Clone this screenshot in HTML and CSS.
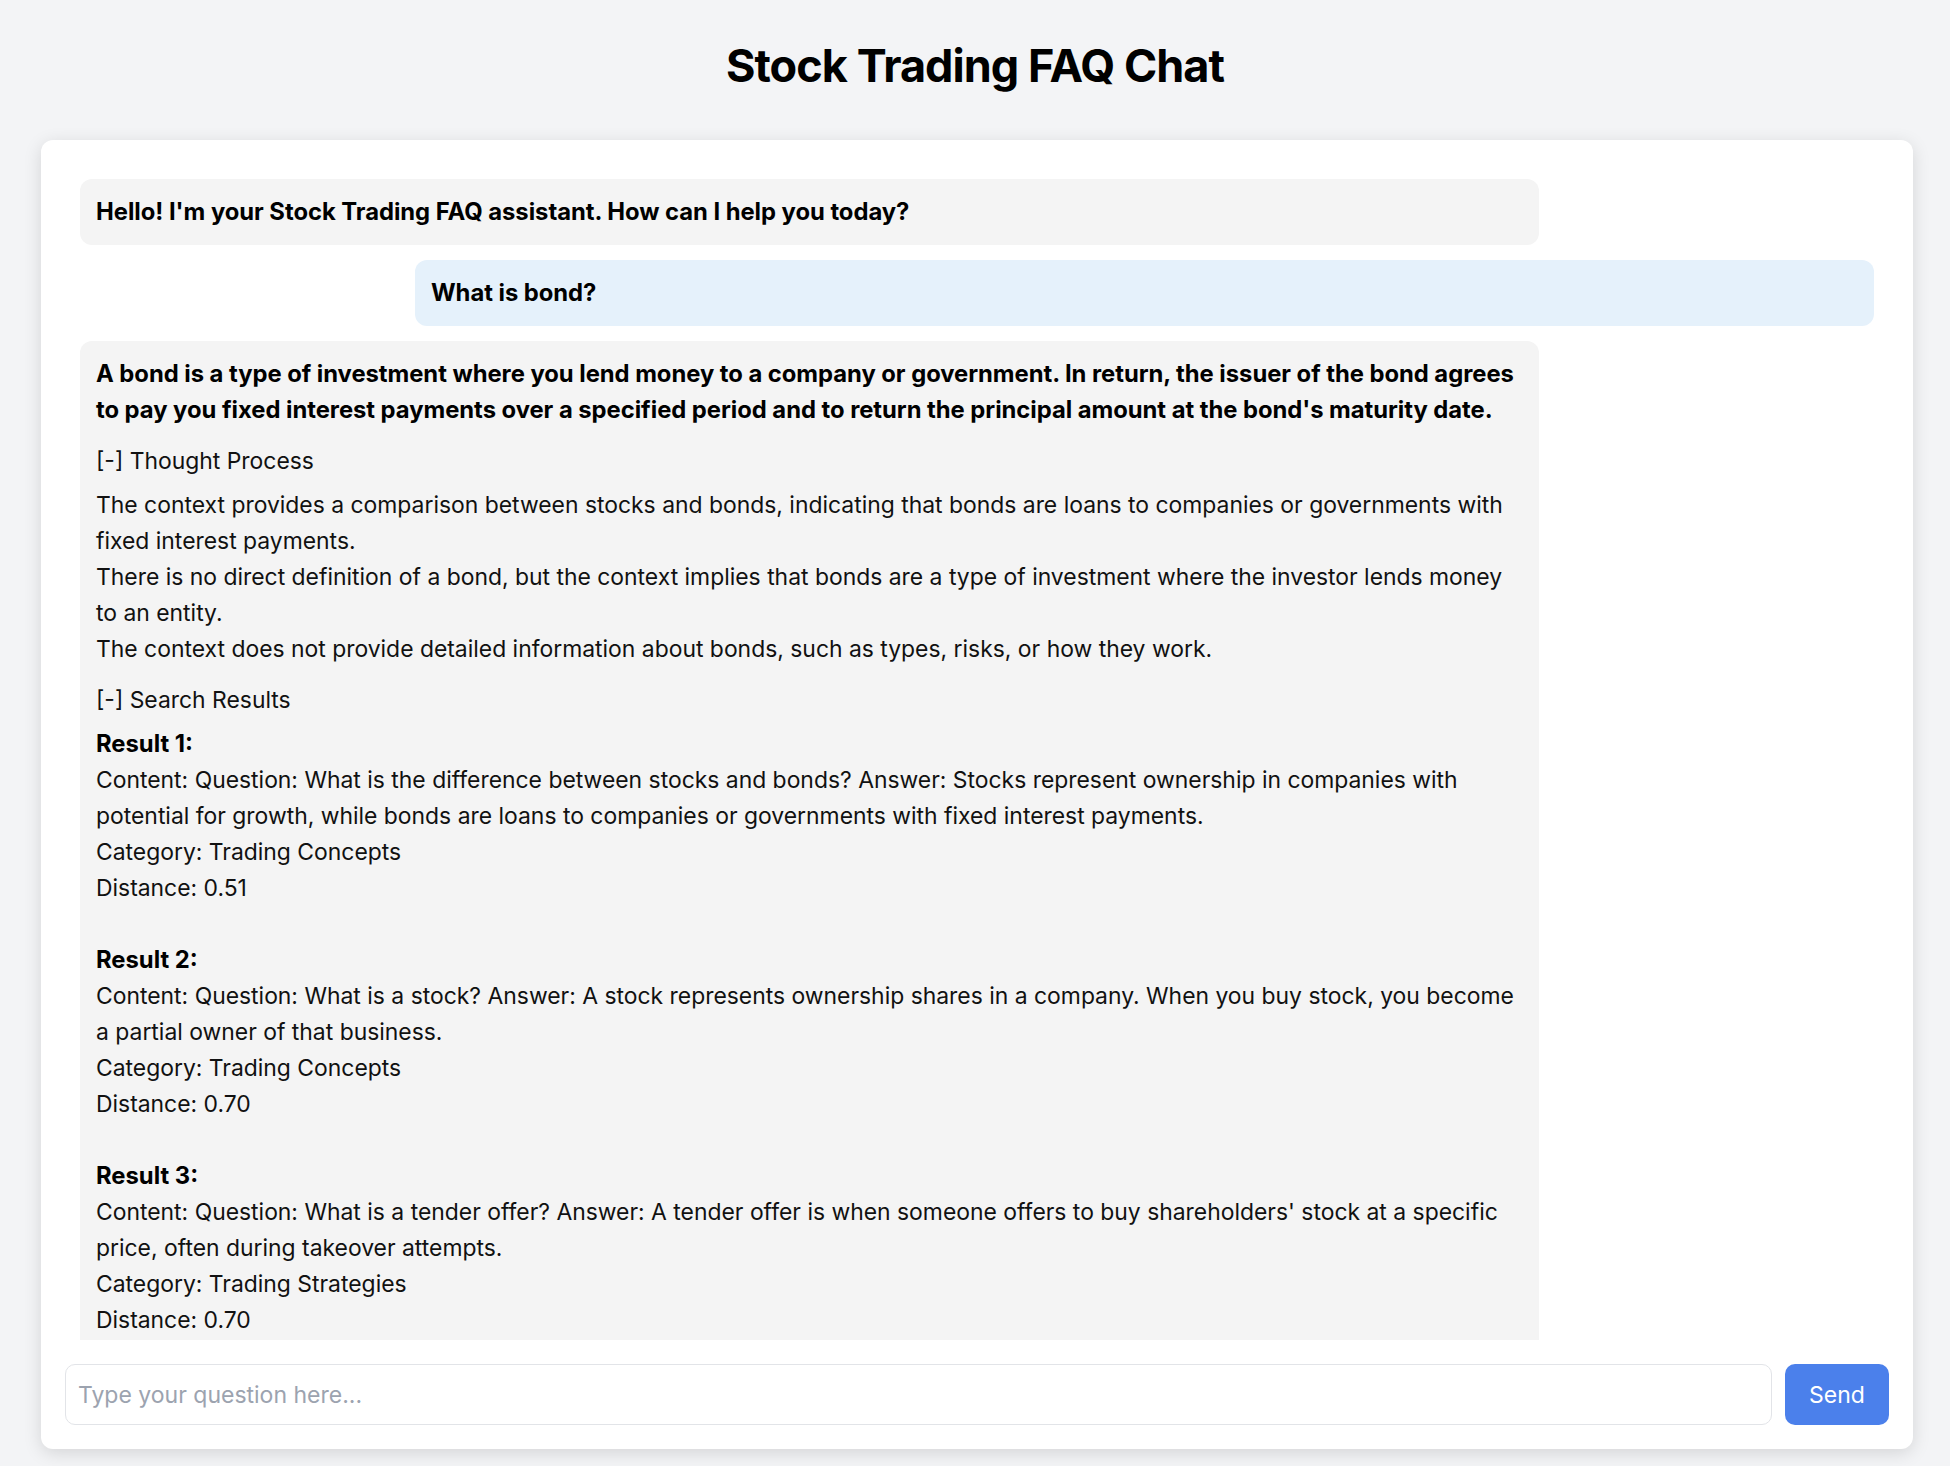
FILE: index.html
```html
<!DOCTYPE html>
<html lang="en">
<head>
<meta charset="utf-8">
<title>Stock Trading FAQ Chat</title>
<link rel="stylesheet" href="styles.css">
</head>
<body>
  <h1 class="title">Stock Trading FAQ Chat</h1>
  <main class="card">
    <div class="messages">
      <div class="bubble bot">
        <p class="answer">Hello! I'm your Stock Trading FAQ assistant. How can I help you today?</p>
      </div>
      <div class="bubble user">
        <p class="answer">What is bond?</p>
      </div>
      <div class="bubble bot">
        <p class="answer">A bond is a type of investment where you lend money to a company or government. In return, the issuer of the bond agrees to pay you fixed interest payments over a specified period and to return the principal amount at the bond's maturity date.</p>
        <div class="toggle">[-] Thought Process</div>
        <div class="section">
          <div>The context provides a comparison between stocks and bonds, indicating that bonds are loans to companies or governments with fixed interest payments.</div>
          <div>There is no direct definition of a bond, but the context implies that bonds are a type of investment where the investor lends money to an entity.</div>
          <div>The context does not provide detailed information about bonds, such as types, risks, or how they work.</div>
        </div>
        <div class="toggle">[-] Search Results</div>
        <div class="section">
          <div class="result">
            <div class="result-title">Result 1:</div>
            <div>Content: Question: What is the difference between stocks and bonds? Answer: Stocks represent ownership in companies with potential for growth, while bonds are loans to companies or governments with fixed interest payments.</div>
            <div>Category: Trading Concepts</div>
            <div>Distance: 0.51</div>
          </div>
          <div class="result">
            <div class="result-title">Result 2:</div>
            <div>Content: Question: What is a stock? Answer: A stock represents ownership shares in a company. When you buy stock, you become a partial owner of that business.</div>
            <div>Category: Trading Concepts</div>
            <div>Distance: 0.70</div>
          </div>
          <div class="result">
            <div class="result-title">Result 3:</div>
            <div>Content: Question: What is a tender offer? Answer: A tender offer is when someone offers to buy shareholders' stock at a specific price, often during takeover attempts.</div>
            <div>Category: Trading Strategies</div>
            <div>Distance: 0.70</div>
          </div>
        </div>
      </div>
    </div>
    <form class="composer">
      <input class="question" type="text" placeholder="Type your question here...">
      <button class="send" type="button">Send</button>
    </form>
  </main>
</body>
</html>
```

FILE: styles.css
```css
* { box-sizing: border-box; }

html, body {
  margin: 0;
  padding: 0;
  background: #f3f4f6;
  height: 1466px;
  overflow: hidden;
}

body {
  font-family: Inter, "Noto Sans", sans-serif;
  color: #111;
  font-size: 22.9px;
  line-height: 36px;
}

.title {
  margin: 38px 0 47px;
  font-size: 45px;
  line-height: 55px;
  font-weight: 700;
  text-align: center;
  color: #000;
  letter-spacing: -0.95px;
}

.card {
  margin-left: 41px;
  width: 1872px;
  height: 1309px;
  background: #fff;
  border-radius: 12px;
  box-shadow: 0 4px 18px rgba(0, 0, 0, 0.13);
  padding: 24px;
  display: flex;
  flex-direction: column;
  gap: 24px;
}

.messages {
  flex: 1;
  min-height: 0;
  overflow: hidden;
  padding: 15px 15px 0;
  display: flex;
  flex-direction: column;
  gap: 15px;
}

.bubble {
  width: 81.33%;
  flex-shrink: 0;
  padding: 15px 16px;
  border-radius: 12px;
}

.bot {
  background: #f4f4f4;
  align-self: flex-start;
}

.user {
  background: #e5f1fb;
  align-self: flex-end;
}

.answer {
  margin: 0;
  font-size: 23.8px;
  letter-spacing: -0.03px;
  font-weight: 700;
  color: #000;
}

.toggle {
  margin-top: 15px;
  cursor: pointer;
}

.section {
  margin-top: 8px;
}

.result {
  margin-bottom: 36px;
}

.result-title {
  font-size: 23.8px;
  font-weight: 700;
  color: #000;
}

.composer {
  display: flex;
  gap: 13px;
  height: 61px;
  margin: 0;
}

.question {
  flex: 1;
  height: 61px;
  border: 1px solid #e2e4e8;
  border-radius: 10px;
  padding: 0 12px;
  font-family: Inter, "Noto Sans", sans-serif;
  font-size: 23px;
  color: #111;
  background: #fff;
  outline: none;
}

.question::placeholder {
  color: #9ca3af;
}

.send {
  width: 104px;
  height: 61px;
  border: none;
  border-radius: 10px;
  background: #4b80eb;
  color: #fff;
  font-family: Inter, "Noto Sans", sans-serif;
  font-size: 23px;
  cursor: pointer;
}
```
